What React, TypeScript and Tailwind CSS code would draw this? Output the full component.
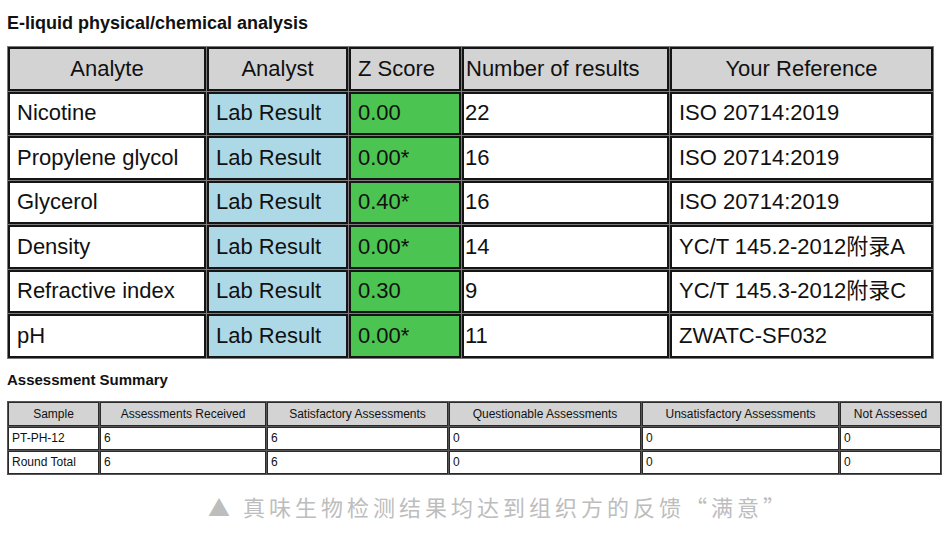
const rows = [
  { analyte: "Nicotine", z: "0.00", n: "22", ref: "ISO 20714:2019" },
  { analyte: "Propylene glycol", z: "0.00*", n: "16", ref: "ISO 20714:2019" },
  { analyte: "Glycerol", z: "0.40*", n: "16", ref: "ISO 20714:2019" },
  { analyte: "Density", z: "0.00*", n: "14", ref: "YC/T 145.2-2012附录A" },
  { analyte: "Refractive index", z: "0.30", n: "9", ref: "YC/T 145.3-2012附录C" },
  { analyte: "pH", z: "0.00*", n: "11", ref: "ZWATC-SF032" },
];

const summary = [
  ["PT-PH-12", "6", "6", "0", "0", "0"],
  ["Round Total", "6", "6", "0", "0", "0"],
];

const sumHeads = [
  "Sample",
  "Assessments Received",
  "Satisfactory Assessments",
  "Questionable Assessments",
  "Unsatisfactory Assessments",
  "Not Assessed",
];

export default function App() {
  const cell = "border-2 border-[#151515] px-[7px] align-middle";
  const sCell = "border border-[#2a2a2a] px-[3px] align-middle";

  return (
    <div
      className="w-[945px] h-[556px] bg-white px-[7px] pt-[12px] text-[#111]"
      style={{ fontFamily: '"Liberation Sans", Arial, "Noto Sans CJK SC", sans-serif' }}
    >
      <h2 className="text-[18px] font-bold leading-[22px]">
        E-liquid physical/chemical analysis
      </h2>

      <table className="mt-[12px] w-[927px] table-fixed border-separate border-spacing-[1px] bg-[#7a7a7a] text-[22px] leading-[26px]">
        <colgroup>
          <col className="w-[198px]" />
          <col className="w-[141px]" />
          <col className="w-[112px]" />
          <col className="w-[207px]" />
          <col />
        </colgroup>
        <thead>
          <tr className="h-[43.5px] bg-[#d3d3d3]">
            <th className={`${cell} text-center font-normal`}>Analyte</th>
            <th className={`${cell} text-center font-normal`}>Analyst</th>
            <th className={`${cell} text-left font-normal`}>Z Score</th>
            <th className="border-2 border-[#151515] px-[2px] text-left align-middle font-normal">
              Number of results
            </th>
            <th className={`${cell} text-center font-normal`}>Your Reference</th>
          </tr>
        </thead>
        <tbody>
          {rows.map((r) => (
            <tr key={r.analyte} className="h-[43.5px]">
              <td className={`${cell} bg-white`}>{r.analyte}</td>
              <td className={`${cell} bg-[#add8e6]`}>Lab Result</td>
              <td className={`${cell} bg-[#4cc452]`}>{r.z}</td>
              <td className="border-2 border-[#151515] bg-white px-[1px] align-middle">{r.n}</td>
              <td className={`${cell} bg-white`}>{r.ref}</td>
            </tr>
          ))}
        </tbody>
      </table>

      <h3 className="mt-[12px] text-[15px] font-bold leading-[18px]">Assessment Summary</h3>

      <table className="mt-[12px] w-[935px] table-fixed border-separate border-spacing-[1px] bg-[#555] text-[12px] leading-[14px]">
        <colgroup>
          <col className="w-[91px]" />
          <col className="w-[166px]" />
          <col className="w-[181px]" />
          <col className="w-[192px]" />
          <col className="w-[197px]" />
          <col />
        </colgroup>
        <thead>
          <tr className="h-[24px] bg-[#d3d3d3]">
            {sumHeads.map((h) => (
              <th key={h} className={`${sCell} text-center font-normal`}>
                {h}
              </th>
            ))}
          </tr>
        </thead>
        <tbody>
          {summary.map((r) => (
            <tr key={r[0]} className="h-[23px] bg-white">
              {r.map((v, i) => (
                <td key={i} className={sCell}>
                  {v}
                </td>
              ))}
            </tr>
          ))}
        </tbody>
      </table>

      <p
        className="mt-[17px] pl-[52px] text-center text-[22px] leading-[28px] tracking-[4px] text-[#bdbdbd]"
        style={{ fontFamily: '"Noto Sans CJK SC", "Noto Sans", sans-serif' }}
      >
        ▲ 真味生物检测结果均达到组织方的反馈“满意”
      </p>
    </div>
  );
}
